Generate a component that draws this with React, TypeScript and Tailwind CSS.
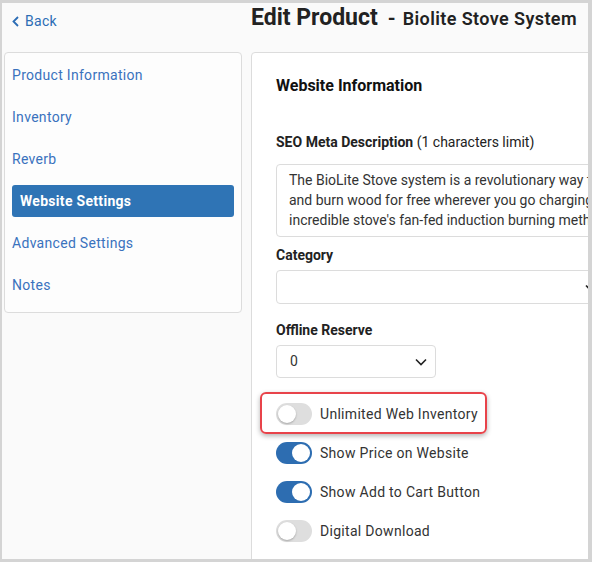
import { useState } from 'react';

const navItems = [
  'Product Information',
  'Inventory',
  'Reverb',
  'Website Settings',
  'Advanced Settings',
  'Notes',
];

function Toggle({ on }: { on: boolean }) {
  return (
    <span
      className={
        on
          ? 'relative inline-block h-[22px] w-[36px] shrink-0 rounded-full bg-[#2d6db1]'
          : 'relative inline-block h-[22px] w-[36px] shrink-0 rounded-full bg-[#dedede]'
      }
    >
      <span
        className={
          on
            ? 'absolute right-[2px] top-[2px] h-[18px] w-[18px] rounded-full bg-white'
            : 'absolute left-[2px] top-[2px] h-[18px] w-[18px] rounded-full bg-white shadow-[0_1px_2px_rgba(0,0,0,0.25)]'
        }
      />
    </span>
  );
}

function Chevron({ className }: { className?: string }) {
  return (
    <svg viewBox="0 0 12 8" className={className} fill="none" stroke="#222" strokeWidth="1.6">
      <path d="M1 1.5l5 5 5-5" />
    </svg>
  );
}

export default function App() {
  const [active] = useState('Website Settings');
  const toggles = [
    { label: 'Unlimited Web Inventory', on: false, highlight: true },
    { label: 'Show Price on Website', on: true },
    { label: 'Show Add to Cart Button', on: true },
    { label: 'Digital Download', on: false },
  ];

  return (
    <div className="h-[562px] w-[592px] overflow-hidden border-b-[3px] border-l-2 border-r-[4px] border-t-[3px] border-[#d4d4d4] bg-[#fafafa] font-['Roboto',sans-serif]">
      {/* header */}
      <div className="flex h-[49px] px-[2px]">
        <div className="w-[238px] shrink-0 pl-2 pt-[8px] tracking-[0.3px]">
          <a className="flex items-center gap-[6px] text-[14px] text-[#2c6db5]">
            <svg viewBox="0 0 7 11" className="h-[11px] w-[7px]" fill="none" stroke="#2c6db5" strokeWidth="1.8">
              <path d="M6 1L1.5 5.5 6 10" />
            </svg>
            Back
          </a>
        </div>
        <div className="ml-[9px] flex items-baseline whitespace-nowrap text-[#222]">
          <span className="text-[23px] font-bold leading-[30px]">Edit Product</span>
          <span className="ml-[10px] mr-[7px] text-[20px] font-bold">-</span>
          <span className="text-[18px] font-semibold tracking-[0.4px]">Biolite Stove System</span>
        </div>
      </div>

      <div className="flex px-[2px]">
        {/* sidebar */}
        <div className="h-[261px] w-[238px] shrink-0 rounded-[4px] border border-[#dcdcdc] bg-[#fdfdfd] px-[7px] pt-[6px] tracking-[0.3px]">
          <div className="flex flex-col gap-[10px]">
            {navItems.map((item) =>
              item === active ? (
                <div
                  key={item}
                  className="flex h-8 items-center rounded-[3px] bg-[#2f74b5] px-2 text-[14px] font-bold text-white"
                >
                  {item}
                </div>
              ) : (
                <div key={item} className="flex h-8 items-center text-[14px] text-[#3a72bd]">
                  {item}
                </div>
              )
            )}
          </div>
        </div>

        {/* main card */}
        <div className="ml-[9px] h-[520px] w-[380px] shrink-0 rounded-[4px] border border-[#dcdcdc] bg-white px-6 pt-[21px]">
          <div className="text-[16px] font-bold leading-6 text-[#111]">Website Information</div>

          <div className="mt-[34px] text-[14px] leading-5 text-[#222]">
            <span className="font-bold">SEO Meta Description</span> (1 characters limit)
          </div>
          <div className="mt-3 h-[73px] overflow-hidden whitespace-nowrap rounded-[4px] border border-[#dcdcdc] px-[12px] pt-[5px] text-[14px] leading-5 text-[#333]">
            The BioLite Stove system is a revolutionary way to cook
            <br />
            and burn wood for free wherever you go charging your
            <br />
            incredible stove's fan-fed induction burning method
          </div>

          <div className="mt-2 text-[14px] font-bold leading-5 text-[#222]">Category</div>
          <div className="relative mt-[5px] h-[34px] rounded-[4px] border border-[#dcdcdc]">
            <Chevron className="absolute right-[8px] top-[13px] h-[8px] w-[12px]" />
          </div>

          <div className="mt-4 text-[14px] font-bold leading-5 text-[#222]">Offline Reserve</div>
          <div className="relative mt-[5px] flex h-[33px] w-[160px] items-center rounded-[4px] border border-[#dcdcdc] pl-[13px] text-[14px] text-[#333]">
            0
            <Chevron className="absolute right-[8px] top-[12px] h-[8px] w-[12px]" />
          </div>

          <div className="mt-6 flex flex-col gap-[15px] tracking-[0.3px]">
            {toggles.map((t) => (
              <div key={t.label} className="relative flex h-6 items-center gap-2">
                {t.highlight && (
                  <div className="absolute -left-[16px] -top-[10px] bottom-[-8px] w-[227px] rounded-[6px] border-2 border-[#e8434a] shadow-[0_2px_5px_rgba(0,0,0,0.3)]" />
                )}
                <Toggle on={t.on} />
                <span className="text-[14px] text-[#333]">{t.label}</span>
              </div>
            ))}
          </div>
        </div>
      </div>
    </div>
  );
}
